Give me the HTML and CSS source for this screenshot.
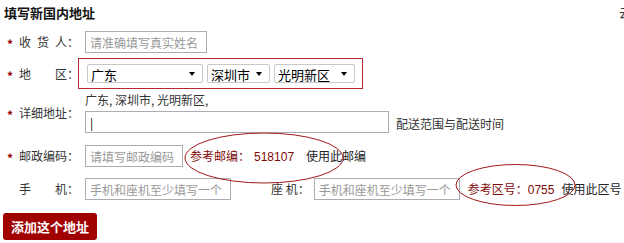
FILE: index.html
```html
<!DOCTYPE html>
<html lang="zh-CN">

<head>
  <meta charset="UTF-8">
  <title>填写新国内地址</title>
  <link rel="stylesheet" href="styles.css">
</head>

<body>

  <div class="head">
    <h3>填写新国内地址</h3>
    <span class="more">云帐户地址簿</span>
  </div>

  <form class="addr-form">
    <div class="row">
      <label class="lbl"><i>*</i><span>收货人</span>：</label>
      <input type="text" class="txt w-name" placeholder="请准确填写真实姓名">
    </div>

    <div class="row">
      <label class="lbl"><i>*</i><span>地区</span>：</label>
      <div class="area-box">
        <span class="sel"><select class="w-prov"><option>广东</option></select></span>
        <span class="sel"><select class="w-city"><option>深圳市</option></select></span>
        <span class="sel"><select class="w-dist"><option>光明新区</option></select></span>
      </div>
    </div>

    <div class="row">
      <label class="lbl"><i>*</i><span>详细地址</span>：</label>
      <div class="detail">
        <div class="area-text">广东, 深圳市, 光明新区,</div>
        <div class="detail-line">
          <input type="text" class="txt w-street" placeholder="|">
          <span class="tip">配送范围与配送时间</span>
        </div>
      </div>
    </div>

    <div class="row">
      <label class="lbl"><i>*</i><span>邮政编码</span>：</label>
      <input type="text" class="txt w-zip" placeholder="请填写邮政编码">
      <span class="ref">参考邮编：<em class="code-zip">518107</em></span>
      <a class="use">使用此邮编</a>
    </div>

    <div class="row">
      <label class="lbl"><i></i><span>手机</span>：</label>
      <input type="text" class="txt w-phone" placeholder="手机和座机至少填写一个">
      <label class="lbl-tel">座 机：</label>
      <input type="text" class="txt w-phone" placeholder="手机和座机至少填写一个">
      <span class="ref ref-tel">参考区号：<em>0755</em></span>
      <a class="use">使用此区号</a>
    </div>

    <button type="button">添加这个地址</button>
  </form>

  <!-- hand-drawn marks over the form -->
  <svg class="marks" width="624" height="243">
    <ellipse cx="264" cy="158" rx="79" ry="25" />
    <ellipse cx="515.5" cy="185" rx="59.5" ry="20.5" />
  </svg>

</body>
</html>
```

FILE: styles.css
```css
html, body {
  overflow: hidden;
}
body {
  margin: 0;
  font-family: "Noto Sans CJK SC", "Liberation Sans", sans-serif;
  font-size: 12px;
  line-height: 16px;
  color: #333;
  background: #fff;
  position: relative;
  height: 243px;
}
.head {
  display: flex;
  align-items: flex-start;
  padding: 5px 0 0 4px;
  height: 16px;
}
.head h3 {
  flex: 1;
  margin: 0;
  font-size: 13px;
  line-height: 16px;
  color: #111;
}
.more {
  flex: none;
  width: 5px;
  overflow: hidden;
  white-space: nowrap;
}
.addr-form {
  margin-top: 10px;
}
.row {
  display: flex;
  align-items: center;
  white-space: nowrap;
}
.row + .row {
  margin-top: 5px;
}
.row:nth-child(3) {
  margin-top: 3px;
}
.row:nth-child(4) {
  margin-top: 12px;
}
.row:nth-child(5) {
  margin-top: 11px;
}
.lbl {
  flex: none;
  width: 85px;
  display: flex;
  align-items: center;
}
.lbl i {
  font-style: normal;
  font-weight: bold;
  color: #990000;
  width: 12px;
  padding-left: 7px;
  position: relative;
  top: 2px;
}
.lbl span {
  display: inline-block;
  width: 48px;
  text-align: justify;
  text-align-last: justify;
}
.txt {
  box-sizing: border-box;
  height: 22px;
  border: 1px solid #abadb3;
  padding: 0 4px;
  font-family: inherit;
  font-size: 12px;
  color: #333;
  outline: none;
}
.txt::placeholder {
  color: #999;
}
.w-name {
  width: 122px;
}
.w-street {
  width: 304px;
}
.w-street::placeholder {
  color: #000;
}
.w-zip {
  width: 98px;
}
.w-phone {
  width: 146px;
}
.area-box {
  margin-left: -7px;
  height: 19px;
  padding: 5px 7px 5px 8px;
  border: 1px solid #b52a2e;
  display: flex;
  gap: 4px;
}
.sel {
  position: relative;
  display: block;
}
.sel::after {
  content: "";
  position: absolute;
  right: 8px;
  top: 8px;
  border-left: 3.5px solid transparent;
  border-right: 3.5px solid transparent;
  border-top: 4px solid #000;
}
.sel select {
  appearance: none;
  -webkit-appearance: none;
  box-sizing: border-box;
  height: 19px;
  border: 1px solid #c8c8c8;
  border-radius: 2px;
  background: #fff;
  padding: 0 0 0 3px;
  font-family: inherit;
  font-size: 13px;
  color: #000;
}
.w-prov {
  width: 116px;
}
.w-city {
  width: 63px;
}
.w-dist {
  width: 81px;
}
.detail-line {
  display: flex;
  align-items: center;
  margin-top: 3px;
}
.tip {
  margin-left: 7px;
  padding-top: 3px;
}
.ref {
  margin-left: 7px;
  color: #7f0a0a;
}
.ref em {
  font-style: normal;
  font-family: "Liberation Sans", sans-serif;
  margin-left: 4px;
}
.ref-tel em {
  margin-left: 0;
}
.use {
  margin-left: 12px;
  color: #222;
  cursor: pointer;
}
.ref-tel + .use {
  margin-left: 7px;
}
.lbl-tel {
  margin-left: 40px;
  margin-right: 4px;
}
.ref-tel {
  margin-left: 8px;
}
button {
  display: block;
  margin: 13px 0 0 3px;
  height: 27px;
  padding: 0 8px;
  border: none;
  border-radius: 3px;
  background: #a00000;
  color: #fff;
  font-family: inherit;
  font-size: 13px;
  font-weight: bold;
  cursor: pointer;
}
.marks {
  position: absolute;
  left: 0;
  top: 0;
  pointer-events: none;
}
.marks ellipse {
  fill: none;
  stroke: #a01818;
  stroke-width: 1;
}
```
